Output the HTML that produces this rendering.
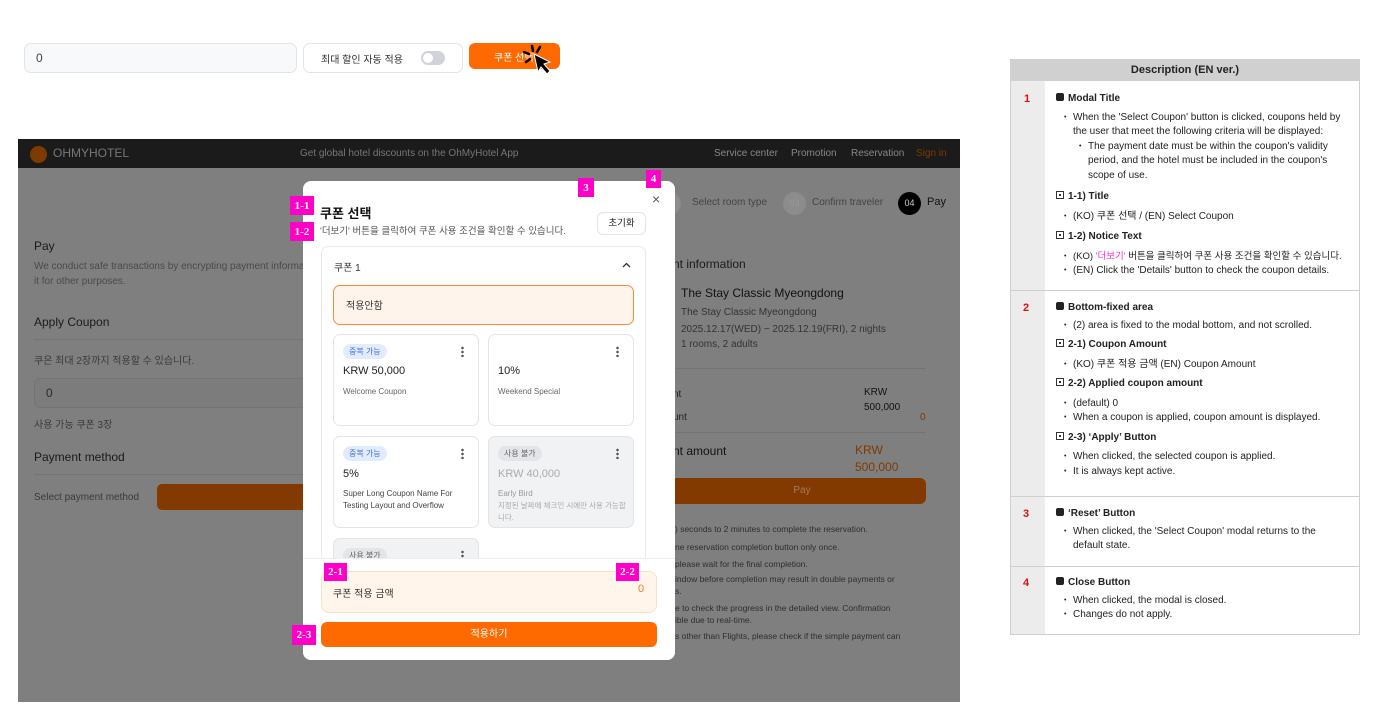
<!DOCTYPE html>
<html><head><meta charset="utf-8"><style>
*{margin:0;padding:0;box-sizing:border-box}
body{width:1377px;height:725px;position:relative;background:#fff;font-family:"Liberation Sans","Noto Sans CJK KR",sans-serif;overflow:hidden;color:#222}
.a{position:absolute}
.t{position:absolute;white-space:nowrap}
.tag{position:absolute;background:#ff00c8;color:#fff;font-weight:bold;font-size:11px;display:flex;align-items:center;justify-content:center;font-family:"Liberation Serif",serif}
.card{position:absolute;border:1px solid #e2e4e8;border-radius:7px;background:#fff}
.pill{position:absolute;left:9px;top:9px;font-size:8px;padding:2px 6px;border-radius:8px;background:#e3ecff;color:#3a6fe0}
.dots{position:absolute;right:14px;top:11px;width:3px;height:11px;background:radial-gradient(circle,#555 1.2px,transparent 1.4px) 0 0/3px 4px repeat-y}
.tb{font-size:10px;line-height:14.5px;color:#222}
.tb b{font-weight:bold}
.li{padding-left:27px;position:relative}
.li:before{content:"•";position:absolute;left:18px;font-size:7px}
.li2{padding-left:42px;position:relative}
.li2:before{content:"•";position:absolute;left:33px;font-size:7px}
.sq{display:inline-block;width:8px;height:8px;background:#222;border-radius:2px;margin-right:4px}
.bx{display:inline-block;width:8px;height:8px;border:1px solid #333;margin-right:4px;position:relative}
.bx:after{content:"";position:absolute;left:2px;top:2px;width:2px;height:2px;background:#333}
</style></head><body>

<div class="a" style="left:24px;top:43px;width:273px;height:30px;border:1px solid #e1e4e8;border-radius:7px;background:#f8f9fb"></div>
<div class="t" style="left:36px;top:51px;font-size:12px;color:#444">0</div>
<div class="a" style="left:303px;top:43px;width:160px;height:30px;border:1px solid #e1e4e8;border-radius:7px;background:#fff"></div>
<div class="t" style="left:321px;top:51px;font-size:10px;color:#333">최대 할인 자동 적용</div>
<div class="a" style="left:421px;top:51px;width:24px;height:14px;border-radius:7px;background:#d0d3d8"></div>
<div class="a" style="left:423px;top:53px;width:10px;height:10px;border-radius:5px;background:#fff"></div>
<div class="a" style="left:469px;top:43px;width:91px;height:26px;border-radius:6px;background:#ff6a00"></div>
<div class="t" style="left:494px;top:49px;font-size:10px;color:#fff">쿠폰 선택</div>
<svg class="a" style="left:520px;top:44px" width="36" height="34" viewBox="0 0 36 34"><path d="M14 10 L30 18 L24 20 L30 27 L27 30 L21 23 L18 28 Z" fill="#000" stroke="#fff" stroke-width="1"/><path d="M12 2 L13 7 M4 8 L9 10 M6 18 L10 15 M20 3 L17 8" stroke="#000" stroke-width="2.5" stroke-linecap="round"/></svg>

<div class="a" style="left:18px;top:139px;width:942px;height:563px;background:#7f7f7f;overflow:hidden">
 <div class="a" style="left:0;top:0;width:942px;height:29px;background:#1b1b1b"></div>
 <div class="a" style="left:12px;top:7px;width:17px;height:17px;border-radius:50%;background:#7f3a00"></div>
 <div class="t" style="left:35px;top:7px;font-size:12px;color:#777">OHMYHOTEL</div>
 <div class="t" style="left:282px;top:9px;font-size:10px;color:#777">Get global hotel discounts on the OhMyHotel App</div>
 <div class="t" style="left:696px;top:9px;font-size:10px;color:#888">Service center</div>
 <div class="t" style="left:773px;top:9px;font-size:10px;color:#888">Promotion</div>
 <div class="t" style="left:833px;top:9px;font-size:10px;color:#888">Reservation</div>
 <div class="t" style="left:898px;top:9px;font-size:10px;color:#7f3a00">Sign in</div>
 <div class="a" style="left:640px;top:53px;width:23px;height:23px;border-radius:50%;background:#8c8c8c"></div>
 <div class="t" style="left:674px;top:58px;font-size:10px;color:#444">Select room type</div>
 <div class="a" style="left:765px;top:53px;width:23px;height:23px;border-radius:50%;background:#8c8c8c;color:#999;font-size:9px;text-align:center;line-height:23px">03</div>
 <div class="t" style="left:794px;top:58px;font-size:10px;color:#444">Confirm traveler</div>
 <div class="a" style="left:880px;top:53px;width:23px;height:23px;border-radius:50%;background:#000;color:#ccc;font-size:9px;text-align:center;line-height:23px">04</div>
 <div class="t" style="left:909px;top:57px;font-size:11px;color:#111">Pay</div>
 <div class="t" style="left:16px;top:100px;font-size:12px;color:#1a1a1a">Pay</div>
 <div class="t" style="left:16px;top:122px;font-size:10px;color:#4a4a4a">We conduct safe transactions by encrypting payment information</div>
 <div class="t" style="left:16px;top:137px;font-size:10px;color:#4a4a4a">it for other purposes.</div>
 <div class="t" style="left:16px;top:176px;font-size:12px;color:#1a1a1a">Apply Coupon</div>
 <div class="a" style="left:16px;top:200px;width:280px;height:1px;background:#747474"></div>
 <div class="t" style="left:16px;top:213px;font-size:10px;color:#3a3a3a">쿠은 최대 2장까지 적용할 수 있습니다.</div>
 <div class="a" style="left:16px;top:239px;width:290px;height:30px;border:1px solid #747474;border-radius:6px;background:#7c7c7c"></div>
 <div class="t" style="left:28px;top:247px;font-size:12px;color:#2a2a2a">0</div>
 <div class="t" style="left:16px;top:277px;font-size:10px;color:#3a3a3a">사용 가능 쿠폰 3장</div>
 <div class="t" style="left:16px;top:311px;font-size:12px;color:#1a1a1a">Payment method</div>
 <div class="a" style="left:16px;top:335px;width:280px;height:1px;background:#747474"></div>
 <div class="t" style="left:16px;top:353px;font-size:10px;color:#3a3a3a">Select payment method</div>
 <div class="a" style="left:139px;top:345px;width:160px;height:26px;border-radius:5px;background:#823a00"></div>
 <div class="t" style="left:655px;top:118px;font-size:12px;color:#1a1a1a">nt information</div>
 <div class="t" style="left:663px;top:147px;font-size:12px;color:#111">The Stay Classic Myeongdong</div>
 <div class="t" style="left:663px;top:168px;font-size:10px;color:#333">The Stay Classic Myeongdong</div>
 <div class="t" style="left:663px;top:185px;font-size:10px;color:#333">2025.12.17(WED) ~ 2025.12.19(FRI), 2 nights</div>
 <div class="t" style="left:663px;top:200px;font-size:10px;color:#333">1 rooms, 2 adults</div>
 <div class="a" style="left:655px;top:229px;width:253px;height:1px;background:#747474"></div>
 <div class="t" style="left:655px;top:250px;font-size:10px;color:#222">nt</div>
 <div class="t" style="left:846px;top:248px;font-size:10px;color:#111">KRW</div>
 <div class="t" style="left:846px;top:263px;font-size:10px;color:#111">500,000</div>
 <div class="t" style="left:655px;top:273px;font-size:10px;color:#222">unt</div>
 <div class="t" style="left:902px;top:273px;font-size:10px;color:#7f3a00">0</div>
 <div class="a" style="left:655px;top:293px;width:253px;height:1px;background:#747474"></div>
 <div class="t" style="left:655px;top:305px;font-size:12px;color:#111">nt amount</div>
 <div class="t" style="left:837px;top:304px;font-size:12px;color:#7f3a00">KRW</div>
 <div class="t" style="left:837px;top:321px;font-size:12px;color:#7f3a00">500,000</div>
 <div class="a" style="left:640px;top:339px;width:268px;height:26px;border-radius:6px;background:#823a00;color:#a9795a;font-size:10px;text-align:center;line-height:26px;padding-left:20px">Pay</div>
 <div class="a" style="left:657px;top:382px;font-size:8.5px;color:#2e2e2e;line-height:17.5px;white-space:nowrap">
 ) seconds to 2 minutes to complete the reservation.<br>ne reservation completion button only once.<br>please wait for the final completion.</div>
 <div class="a" style="left:657px;top:434px;font-size:8.5px;color:#2e2e2e;line-height:12px;white-space:nowrap">indow before completion may result in double payments or<br>s.</div>
 <div class="a" style="left:657px;top:463px;font-size:8.5px;color:#2e2e2e;line-height:12px;white-space:nowrap">e to check the progress in the detailed view. Confirmation<br>ible due to real-time.</div>
 <div class="a" style="left:657px;top:492px;font-size:8.5px;color:#2e2e2e;white-space:nowrap">s other than Flights, please check if the simple payment can</div>
</div>

<div class="a" style="left:303px;top:181px;width:372px;height:479px;background:#fff;border-radius:8px;overflow:hidden">
 <div class="t" style="left:17px;top:22px;font-size:13px;font-weight:bold;color:#111">쿠폰 선택</div>
 <div class="t" style="left:17px;top:42px;font-size:9.5px;color:#555">'더보기' 버튼을 클릭하여 쿠폰 사용 조건을 확인할 수 있습니다.</div>
 <div class="a" style="left:294px;top:31px;width:49px;height:23px;border:1px solid #e2e4e8;border-radius:6px;font-size:9.5px;text-align:center;line-height:21px;color:#222">초기화</div>
 <div class="t" style="left:349px;top:10px;font-size:14px;color:#555">×</div>
 <div class="a" style="left:18px;top:65px;width:325px;height:320px;border:1px solid #e8eaed;border-radius:7px;border-bottom:none"></div>
 <div class="t" style="left:31px;top:78px;font-size:10px;color:#333">쿠폰 1</div>
 <svg class="a" style="left:319px;top:81px" width="9" height="6"><path d="M1 5 L4.5 1.5 L8 5" stroke="#333" stroke-width="1.3" fill="none"/></svg>
 <div class="a" style="left:30px;top:104px;width:301px;height:40px;border:1.5px solid #ff8a3a;border-radius:7px;background:#fff4eb"></div>
 <div class="t" style="left:43px;top:116px;font-size:10px;color:#333">적용안함</div>
 <div class="card" style="left:30px;top:153px;width:146px;height:92px"><div class="pill">중복 가능</div><div class="dots"></div>
  <div class="t" style="left:9px;top:30px;font-size:11px;color:#222">KRW 50,000</div><div class="t" style="left:9px;top:52px;font-size:8px;color:#666">Welcome Coupon</div></div>
 <div class="card" style="left:185px;top:153px;width:146px;height:92px"><div class="dots"></div>
  <div class="t" style="left:9px;top:30px;font-size:11px;color:#222">10%</div><div class="t" style="left:9px;top:52px;font-size:8px;color:#666">Weekend Special</div></div>
 <div class="card" style="left:30px;top:255px;width:146px;height:92px"><div class="pill">중복 가능</div><div class="dots"></div>
  <div class="t" style="left:9px;top:31px;font-size:11px;color:#222">5%</div><div class="a" style="left:9px;top:51px;font-size:8px;color:#444;line-height:11.5px">Super Long Coupon Name For<br>Testing Layout and Overflow</div></div>
 <div class="card" style="left:185px;top:255px;width:146px;height:92px;background:#f1f2f4"><div class="pill" style="background:#e4e5e8;color:#666">사용 불가</div><div class="dots"></div>
  <div class="t" style="left:9px;top:31px;font-size:11px;color:#aaa">KRW 40,000</div><div class="t" style="left:9px;top:52px;font-size:8px;color:#999">Early Bird</div><div class="a" style="left:9px;top:63px;font-size:7.5px;color:#aaa;line-height:11.5px;width:130px">지정된 날짜에 체크인 시에만 사용 가능합니다.</div></div>
 <div class="card" style="left:30px;top:357px;width:146px;height:40px;background:#f1f2f4"><div class="pill" style="background:#e4e5e8;color:#666">사용 불가</div><div class="dots"></div></div>
 <div class="a" style="left:0;top:377px;width:372px;height:102px;background:#fff;border-top:1px solid #eee"></div>
 <div class="a" style="left:18px;top:390px;width:336px;height:42px;border:1px solid #fde0c4;border-radius:8px;background:#fff5eb"></div>
 <div class="t" style="left:30px;top:404px;font-size:10px;color:#333">쿠폰 적용 금액</div>
 <div class="t" style="left:335px;top:402px;font-size:11px;color:#ff7a1a">0</div>
 <div class="a" style="left:18px;top:441px;width:336px;height:25px;border-radius:6px;background:#ff6a00;color:#fff;font-size:10px;text-align:center;line-height:25px">적용하기</div>
</div>

<div class="tag" style="left:290px;top:196px;width:24px;height:19px">1-1</div>
<div class="tag" style="left:290px;top:222px;width:24px;height:19px">1-2</div>
<div class="tag" style="left:578px;top:178px;width:16px;height:19px">3</div>
<div class="tag" style="left:646px;top:170px;width:15px;height:18px">4</div>
<div class="tag" style="left:324px;top:563px;width:23px;height:18px">2-1</div>
<div class="tag" style="left:616px;top:563px;width:23px;height:18px">2-2</div>
<div class="tag" style="left:292px;top:625px;width:24px;height:20px">2-3</div>

<div class="a" style="left:1010px;top:59px;width:350px;height:576px;border:1px solid #cfcfcf;background:#fff"></div>
<div class="a" style="left:1010px;top:59px;width:350px;height:22px;background:#d0d0d0;font-weight:bold;font-size:11px;text-align:center;line-height:22px;color:#222">Description (EN ver.)</div>
<div class="a" style="left:1011px;top:81px;width:34px;height:553px;background:#ececec"></div>
<div class="a" style="left:1010px;top:290px;width:350px;height:1px;background:#cfcfcf"></div>
<div class="a" style="left:1010px;top:496px;width:350px;height:1px;background:#cfcfcf"></div>
<div class="a" style="left:1010px;top:566px;width:350px;height:1px;background:#cfcfcf"></div>
<div class="t" style="left:1024px;top:93px;font-size:11px;font-weight:bold;color:#e01010">1</div>
<div class="t" style="left:1023px;top:302px;font-size:11px;font-weight:bold;color:#e01010">2</div>
<div class="t" style="left:1023px;top:508px;font-size:11px;font-weight:bold;color:#e01010">3</div>
<div class="t" style="left:1023px;top:577px;font-size:11px;font-weight:bold;color:#e01010">4</div>

<div class="a tb" style="left:1046px;top:92px;width:302px">
<div style="padding-left:10px"><span class="sq"></span><b>Modal Title</b></div>
<div class="li" style="margin-top:4px">When the 'Select Coupon' button is clicked, coupons held by the user that meet the following criteria will be displayed:</div>
<div class="li2">The payment date must be within the coupon's validity period, and the hotel must be included in the coupon's scope of use.</div>
<div style="padding-left:10px;margin-top:7px"><span class="bx"></span><b>1-1) Title</b></div>
<div class="li" style="margin-top:5px">(KO) 쿠폰 선택 / (EN) Select Coupon</div>
<div style="padding-left:10px;margin-top:6px"><span class="bx"></span><b>1-2) Notice Text</b></div>
<div class="li" style="margin-top:5px;white-space:nowrap;font-size:9.5px">(KO) <span style="color:#ff2ad0">'더보기'</span> 버튼을 클릭하여 쿠폰 사용 조건을 확인할 수 있습니다.</div>
<div class="li">(EN) Click the 'Details' button to check the coupon details.</div>
</div>

<div class="a tb" style="left:1046px;top:301px;width:302px">
<div style="padding-left:10px"><span class="sq"></span><b>Bottom-fixed area</b></div>
<div class="li" style="margin-top:3px">(2) area is fixed to the modal bottom, and not scrolled.</div>
<div style="padding-left:10px;margin-top:5px"><span class="bx"></span><b>2-1) Coupon Amount</b></div>
<div class="li" style="margin-top:5px">(KO) 쿠폰 적용 금액 (EN) Coupon Amount</div>
<div style="padding-left:10px;margin-top:5px"><span class="bx"></span><b>2-2) Applied coupon amount</b></div>
<div class="li" style="margin-top:5px">(default) 0</div>
<div class="li">When a coupon is applied, coupon amount is displayed.</div>
<div style="padding-left:10px;margin-top:5px"><span class="bx"></span><b>2-3) ‘Apply’ Button</b></div>
<div class="li" style="margin-top:5px">When clicked, the selected coupon is applied.</div>
<div class="li">It is always kept active.</div>
</div>

<div class="a tb" style="left:1046px;top:507px;width:302px">
<div style="padding-left:10px"><span class="sq"></span><b>‘Reset’ Button</b></div>
<div class="li" style="margin-top:3px">When clicked, the 'Select Coupon' modal returns to the default state.</div>
</div>

<div class="a tb" style="left:1046px;top:576px;width:302px">
<div style="padding-left:10px"><span class="sq"></span><b>Close Button</b></div>
<div class="li" style="margin-top:3px">When clicked, the modal is closed.</div>
<div class="li">Changes do not apply.</div>
</div>
</body></html>
